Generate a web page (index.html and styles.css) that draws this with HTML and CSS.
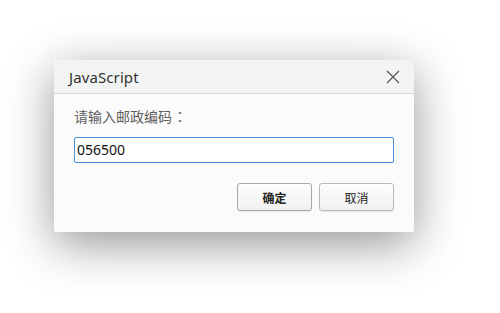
FILE: index.html
```html
<!DOCTYPE html>
<html>
<head>
<meta charset="utf-8">
<link rel="stylesheet" href="styles.css">
</head>
<body>
<div class="stage">
  <div class="dialog">
    <div class="header">
      <span class="title">JavaScript</span>
      <svg class="close" width="14" height="14" viewBox="0 0 14 14"><path d="M1 1L13 13M13 1L1 13" stroke="#555" stroke-width="1.2" fill="none"/></svg>
    </div>
    <div class="body">
      <div class="label">请输入邮政编码<span class="colon">：</span></div>
      <div class="input">056500</div>
      <div class="buttons">
        <div class="btn primary">确定</div>
        <div class="btn">取消</div>
      </div>
    </div>
  </div>
</div>
</body>
</html>
```
FILE: styles.css
```css
html, body { margin: 0; padding: 0; background: #fff; }
.stage { width: 500px; height: 313px; padding: 60px 0 0 54px; box-sizing: border-box; }
.dialog {
  width: 360px; height: 172px; background: #fbfbfb; border-radius: 2px;
  box-shadow: 0 12px 48px rgba(0,0,0,0.42);
  font-family: "Noto Sans", "Noto Sans CJK SC", sans-serif;
  display: flex; flex-direction: column; overflow: hidden;
}
.header {
  height: 33px; background: #f2f4f4; border-bottom: 1px solid #d6dadb;
  display: flex; align-items: center; justify-content: space-between;
  padding: 0 14px 0 15px;
}
.title { font-size: 15px; color: #333; letter-spacing: 0.1px; padding-top: 1px; }
.close { display: block; }
.body { padding: 12px 20px 0 20px; display: flex; flex-direction: column; }
.label { font-family: "Noto Sans CJK SC", sans-serif; font-size: 14px; color: #5e5e5e; height: 20px; line-height: 20px; }
.colon { font-family: "Noto Sans CJK JP", sans-serif; margin-left: 1px; }
.input {
  margin-top: 11px; height: 24px; border: 1px solid #4a90d9; border-radius: 2px; background: #fff;
  font-size: 14px; line-height: 24px; color: #111; padding-left: 2px; font-family: "Noto Sans", sans-serif;
}
.buttons { display: flex; justify-content: flex-end; gap: 7px; margin-top: 20px; }
.btn {
  width: 73px; height: 26px; border: 1px solid #b9b9b9; border-radius: 3px;
  background: linear-gradient(#fdfdfd, #f1f1f1);
  font-family: "Noto Sans CJK SC", sans-serif; font-size: 12px; color: #222;
  display: flex; align-items: center; justify-content: center;
  box-shadow: 0 1px 1px rgba(0,0,0,0.08);
}
.btn.primary { font-weight: bold; border-color: #a8a8a8; }
```
